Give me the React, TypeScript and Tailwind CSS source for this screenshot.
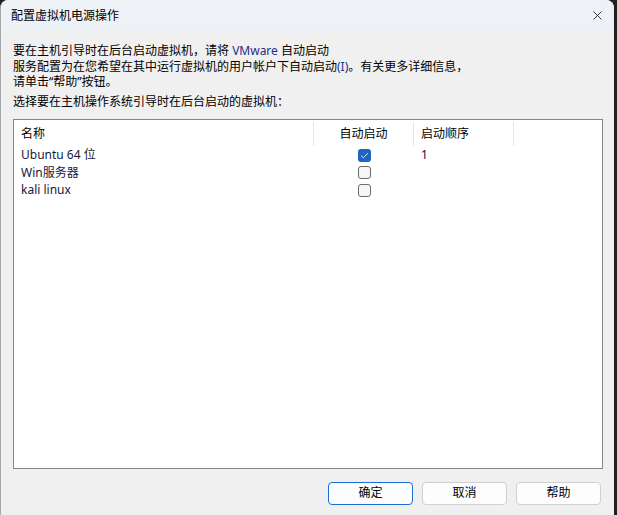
import { X } from "lucide-react";

type VmRow = {
  name: string;
  autoStart: boolean;
  order?: string;
};

const vms: VmRow[] = [
  { name: "Ubuntu 64 位", autoStart: true, order: "1" },
  { name: "Win服务器", autoStart: false },
  { name: "kali linux", autoStart: false },
];

function Checkbox({ checked }: { checked: boolean }) {
  if (checked) {
    return (
      <span className="flex h-[13px] w-[13px] items-center justify-center rounded-[3px] bg-[#1d64c4]">
        <svg width="9" height="7" viewBox="0 0 9 7" fill="none">
          <path d="M1 3.6 3.3 5.8 8 1.2" stroke="#dce9fb" strokeWidth="1" />
        </svg>
      </span>
    );
  }
  return (
    <span className="block h-[13px] w-[13px] rounded-[3px] border border-[#6b6b6b] bg-[#f6f6f6]" />
  );
}

function DialogButton({ label, primary }: { label: string; primary?: boolean }) {
  return (
    <button
      className={`flex h-[23px] w-[85px] items-center justify-center rounded-[4px] border bg-[#fdfdfd] text-[12px] text-black ${
        primary ? "border-[#1a6ed6]" : "border-[#d0d0d0]"
      }`}
    >
      {label}
    </button>
  );
}

export default function App() {
  return (
    <div
      className="h-[515px] w-[617px] bg-[#202020]"
      style={{ fontFamily: '"Segoe UI", "Noto Sans", "Noto Sans CJK SC", sans-serif' }}
    >
      <div className="flex h-[515px] w-[614px] flex-col overflow-hidden rounded-t-[8px] border-l border-[#a8a8a8] bg-[#f0f0f0]">
        {/* title bar */}
        <div className="flex h-[31px] shrink-0 items-center justify-between bg-[#eef1f6] pl-[10px] pr-[9px]">
          <span className="text-[12px] text-black">配置虚拟机电源操作</span>
          <X size={15} strokeWidth={1.2} className="text-black" />
        </div>

        {/* description */}
        <div className="flex flex-col px-[12px] pt-[12px] text-[12px] leading-[15.5px] text-black">
          <span>
            要在主机引导时在后台启动虚拟机，请将 <span className="text-[#1c2f8a]">VMware</span> 自动启动
          </span>
          <span>
            服务配置为在您希望在其中运行虚拟机的用户帐户下自动启动<span className="text-[#1c2f8a]">(I)</span>。有关更多详细信息，
          </span>
          <span>请单击“帮助”按钮。</span>
          <span className="mt-[4.5px]">选择要在主机操作系统引导时在后台启动的虚拟机：</span>
        </div>

        {/* vm list */}
        <div className="mx-[12px] mt-[9px] h-[350px] w-[590px] border border-[#82878f] bg-white text-[12px] text-black">
          <div className="flex h-[27px] items-center pt-[1px]">
            <div className="flex h-[24px] w-[300px] items-center border-r border-[#e5e5e5] pl-[7px]">名称</div>
            <div className="flex h-[24px] w-[100px] items-center justify-center border-r border-[#e5e5e5]">
              自动启动
            </div>
            <div className="flex h-[24px] w-[100px] items-center border-r border-[#e5e5e5] pl-[7px]">
              启动顺序
            </div>
          </div>
          {vms.map((vm) => (
            <div key={vm.name} className="flex h-[17.5px] items-center">
              <div className="w-[300px] pl-[7px] text-[#15183a]">{vm.name}</div>
              <div className="flex w-[100px] justify-center">
                <Checkbox checked={vm.autoStart} />
              </div>
              <div className="w-[100px] pl-[7px] text-[#2a0a3a]">{vm.order ?? ""}</div>
            </div>
          ))}
        </div>

        {/* buttons */}
        <div className="flex justify-end gap-[9px] pr-[13px] pt-[13px]">
          <DialogButton label="确定" primary />
          <DialogButton label="取消" />
          <DialogButton label="帮助" />
        </div>
      </div>
    </div>
  );
}
